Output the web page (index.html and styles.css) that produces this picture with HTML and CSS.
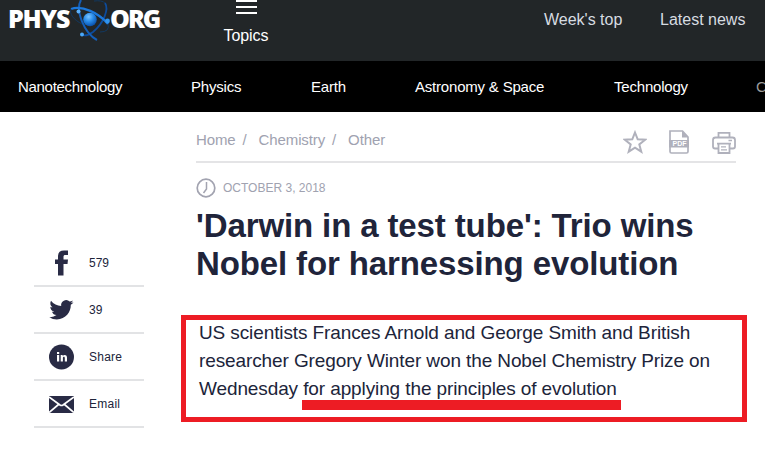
FILE: index.html
```html
<!DOCTYPE html>
<html lang="en">
<head>
<meta charset="utf-8">
<title>Phys.org</title>
<link rel="stylesheet" href="styles.css">
</head>
<body>
<header class="top">
  <div class="logo">
    <span class="phys">PHYS</span>
    <svg class="atom" width="42" height="42" viewBox="0 0 42 42" fill="none">
      <defs><radialGradient id="core" cx=".4" cy=".3" r=".7"><stop stop-color="#7bc4ff"/><stop offset=".5" stop-color="#288be9"/><stop offset="1" stop-color="#0951ad"/></radialGradient></defs>
      <path d="M35 3C39 9 34 23 23 32C19 35 15 36 12 35" stroke="#0d4b9b" stroke-width="1.8"/>
      <path d="M11 0C5 10 14 33 27 40" stroke="#145eb8" stroke-width="2"/>
      <path d="M1 9C12 5 29 13 38 24" stroke="#1c78db" stroke-width="2.2"/>
      <path d="M1 9C-1 14 4 20 12 24M24 1Q32 0 35 3M38 24Q40 32 30 32" stroke="#123860"/>
      <circle cx="20" cy="19.500" r="6.800" fill="url(#core)"/>
      <circle cx="8.500" cy="11.500" r="2" fill="#5cb0fa"/><circle cx="37.500" cy="21" r="2.400" fill="#3295ed"/><circle cx="12" cy="34.500" r="2" fill="#4aa8fa"/>
    </svg>
    <span class="org">ORG</span>
  </div>
  <div class="topics"><span class="bars"></span><span>Topics</span></div>
  <div class="links"><span class="week">Week's top</span><span class="latest">Latest news</span></div>
</header>
<nav class="nav"><span>Nanotechnology</span><span>Physics</span><span>Earth</span><span>Astronomy &amp; Space</span><span>Technology</span><span class="cut">C</span></nav>
<main class="page">
  <aside class="share">
    <div class="row"><svg width="25" height="26" viewBox="0 0 25 26"><path d="M9 25.500V14H6V9.500h3V6.500C9 2.500 11 .500 15 .500h4V5h-2.500C15 5 14.500 5.500 14.500 7v2.500H19l-.5 4.500h-4v11.500z" fill="#292b45"/></svg><span>579</span></div>
    <div class="row"><svg width="25" height="26" viewBox="0 0 25 26"><path d="M24.500 5.200c-.9.400-1.800.7-2.700.8 1-.6 1.700-1.500 2-2.600-.9.500-2 .9-3.100 1.200A5 5 0 0 0 12.200 9C8.200 8.800 4.500 6.900 2 3.700c-1.300 2.300-.7 5.200 1.500 6.600-.8 0-1.600-.2-2.200-.6 0 2.400 1.600 4.400 3.900 4.900-.7.200-1.500.2-2.200.1.600 2 2.400 3.300 4.500 3.400A10 10 0 0 1 .3 20.200a14 14 0 0 0 7.500 2.200c9 0 14.200-7.500 14-14.600 1-.7 2-1.500 2.700-2.600z" fill="#292b45"/></svg><span>39</span></div>
    <div class="row"><svg width="25" height="26" viewBox="0 0 25 26"><circle cx="12.500" cy="13" r="12.500" fill="#292b45"/><path d="M8 11h2.200v6.500H8zM8 8h2.200v2H8zM11.700 11h2v1c1-1.700 4.300-1.500 4.300 1.500v4h-2.200v-3.600c0-1.600-1.900-1.500-1.900 0v3.600h-2.200z" fill="#fff"/></svg><span class="label">Share</span></div>
    <div class="row"><svg width="25" height="26" viewBox="0 0 25 26"><path d="M0 5h25v17H0z" fill="#292b45"/><path d="M0 6l11 8q1.500 1 3 0l11-8M0 21.500l9.500-8M25 21.500l-9.500-8" fill="none" stroke="#fff" stroke-width="1.700"/></svg><span class="label">Email</span></div>
  </aside>
  <article class="article">
    <div class="bar">
      <div class="crumbs"><span>Home</span><i>/</i><span>Chemistry</span><i>/</i><span>Other</span></div>
      <div class="tools">
        <svg width="24" height="24" viewBox="0 0 24 24"><path d="M12 2.500l2.700 6.800 7.500.4-5.900 4.700 2 7.300L12 17.700l-6.300 4 2-7.300-5.900-4.700 7.500-.4z" fill="none" stroke="#b0b1bc" stroke-width="2"/></svg>
        <svg class="pdf" width="20" height="24" viewBox="0 0 20 24"><path d="M1 1h12.500L19 7v14.500q0 1.500-1.500 1.500h-15Q1 23 1 21.500z" fill="#fff" stroke="#b0b1bc" stroke-width="1.700"/><path d="M13 1v6.500h6zM0 10h20v7.500H0z" fill="#b0b1bc"/><text x="3.500" y="16.300">PDF</text></svg>
        <svg class="print" width="24" height="24" viewBox="0 0 24 24" fill="none" stroke="#b0b1bc" stroke-width="1.800"><path d="M6.500 7.500V2.800h11v4.700M6.500 18.500H3q-2 0-2-2V10q0-2.500 2.500-2.500h17Q23 7.500 23 10v6.500q0 2-2 2h-3.500M5 13.700h14M6.500 14v9h11v-9"/><path d="M9 16.800h5M9 19.800h6M16.500 10.500H20" stroke-width="1.300"/></svg>
      </div>
    </div>
    <div class="date"><svg width="20" height="20" viewBox="0 0 20 20" fill="none" stroke="#a2a3b0" stroke-width="1.700"><circle cx="10" cy="10" r="8.800"/><path d="M10.500 4v7L7.500 15" stroke-width="1.500"/></svg><span>OCTOBER 3, 2018</span></div>
    <h1>'Darwin in a test tube': Trio wins<br>Nobel for harnessing evolution</h1>
    <div class="box"><p class="lead">US scientists Frances Arnold and George Smith and British<br>researcher Gregory Winter won the Nobel Chemistry Prize on<br>Wednesday <span class="mark">for applying the principles of evolution</span></p></div>
  </article>
</main>
</body>
</html>
```
FILE: styles.css
```css
* { box-sizing: border-box; }
body { margin: 0; background: #fff; color: #20243a; font-family: "Liberation Sans", Arial, sans-serif; overflow: hidden; }
svg { display: block; flex: none; }
.top { height: 61px; background: #222628; display: flex; color: #fff; }
.logo { display: flex; width: 196px; padding-left: 8px; font: 800 25px/36px "Open Sans", sans-serif; flex: none; }
.phys { width: 62px; letter-spacing: -1.2px; }
.atom { margin-right: -2px; }
.org { letter-spacing: -2px; }
.topics { width: 100px; display: flex; flex-direction: column; align-items: center; font-size: 16px; line-height: 20px; letter-spacing: -.1px; flex: none; }
.bars { width: 21px; height: 14px; margin-bottom: 12px; border-top: 2px solid #fff; border-bottom: 2px solid #fff; background: linear-gradient(#fff, #fff) 0 4px / 21px 2px no-repeat; }
.links { display: flex; margin-left: 248px; font-size: 16px; line-height: 20px; padding-top: 10px; color: #d7dce1; white-space: nowrap; }
.week { width: 116px; }
.nav { height: 51px; background: #000; color: #fff; display: grid; grid-template-columns: 173px 120px 104px 199px 142px 20px; padding-left: 18px; font-size: 15px; letter-spacing: -.2px; line-height: 51px; white-space: nowrap; overflow: hidden; }
.nav span:first-child { letter-spacing: -.3px; }
.nav .cut { color: #9a9a9a; }
.page { display: grid; grid-template-columns: 110px 540px; column-gap: 52px; padding-left: 34px; }
.share { padding-top: 128px; }
.row { height: 47px; border-bottom: 2px solid #e2e3e5; display: flex; align-items: center; gap: 15px; padding-left: 15px; font-size: 12px; }
.label { letter-spacing: .25px; }
.bar { height: 51px; border-bottom: 2px solid #e4e4e6; display: flex; justify-content: space-between; color: #a0a2b0; font-size: 15px; }
.crumbs { display: flex; line-height: 20px; padding-top: 18px; letter-spacing: -.12px; }
.crumbs i { font-style: normal; margin: 0 12px 0 7px; }
.tools { display: flex; gap: 22px; padding-top: 18px; }
.print { margin-left: 1px; }
.pdf text { font: bold 7px "Liberation Sans", sans-serif; fill: #fff; }
.date { display: flex; align-items: center; gap: 7px; height: 20px; margin-top: 15px; font-size: 12px; color: #a0a2b0; }
h1 { margin: 9px 0 0; font-size: 33px; line-height: 38px; letter-spacing: -.12px; white-space: nowrap; }
.box { margin: 32px 0 0 -15px; width: 566px; height: 107px; border: 5px solid #ed1c24; padding-left: 13px; }
.lead { margin: -1px 0 0; font-size: 19px; letter-spacing: -.11px; line-height: 28px; white-space: nowrap; }
.mark { position: relative; }
.mark::after { content: ""; position: absolute; left: -1px; right: -4px; top: 22px; height: 10px; background: #ed1c24; }
```
